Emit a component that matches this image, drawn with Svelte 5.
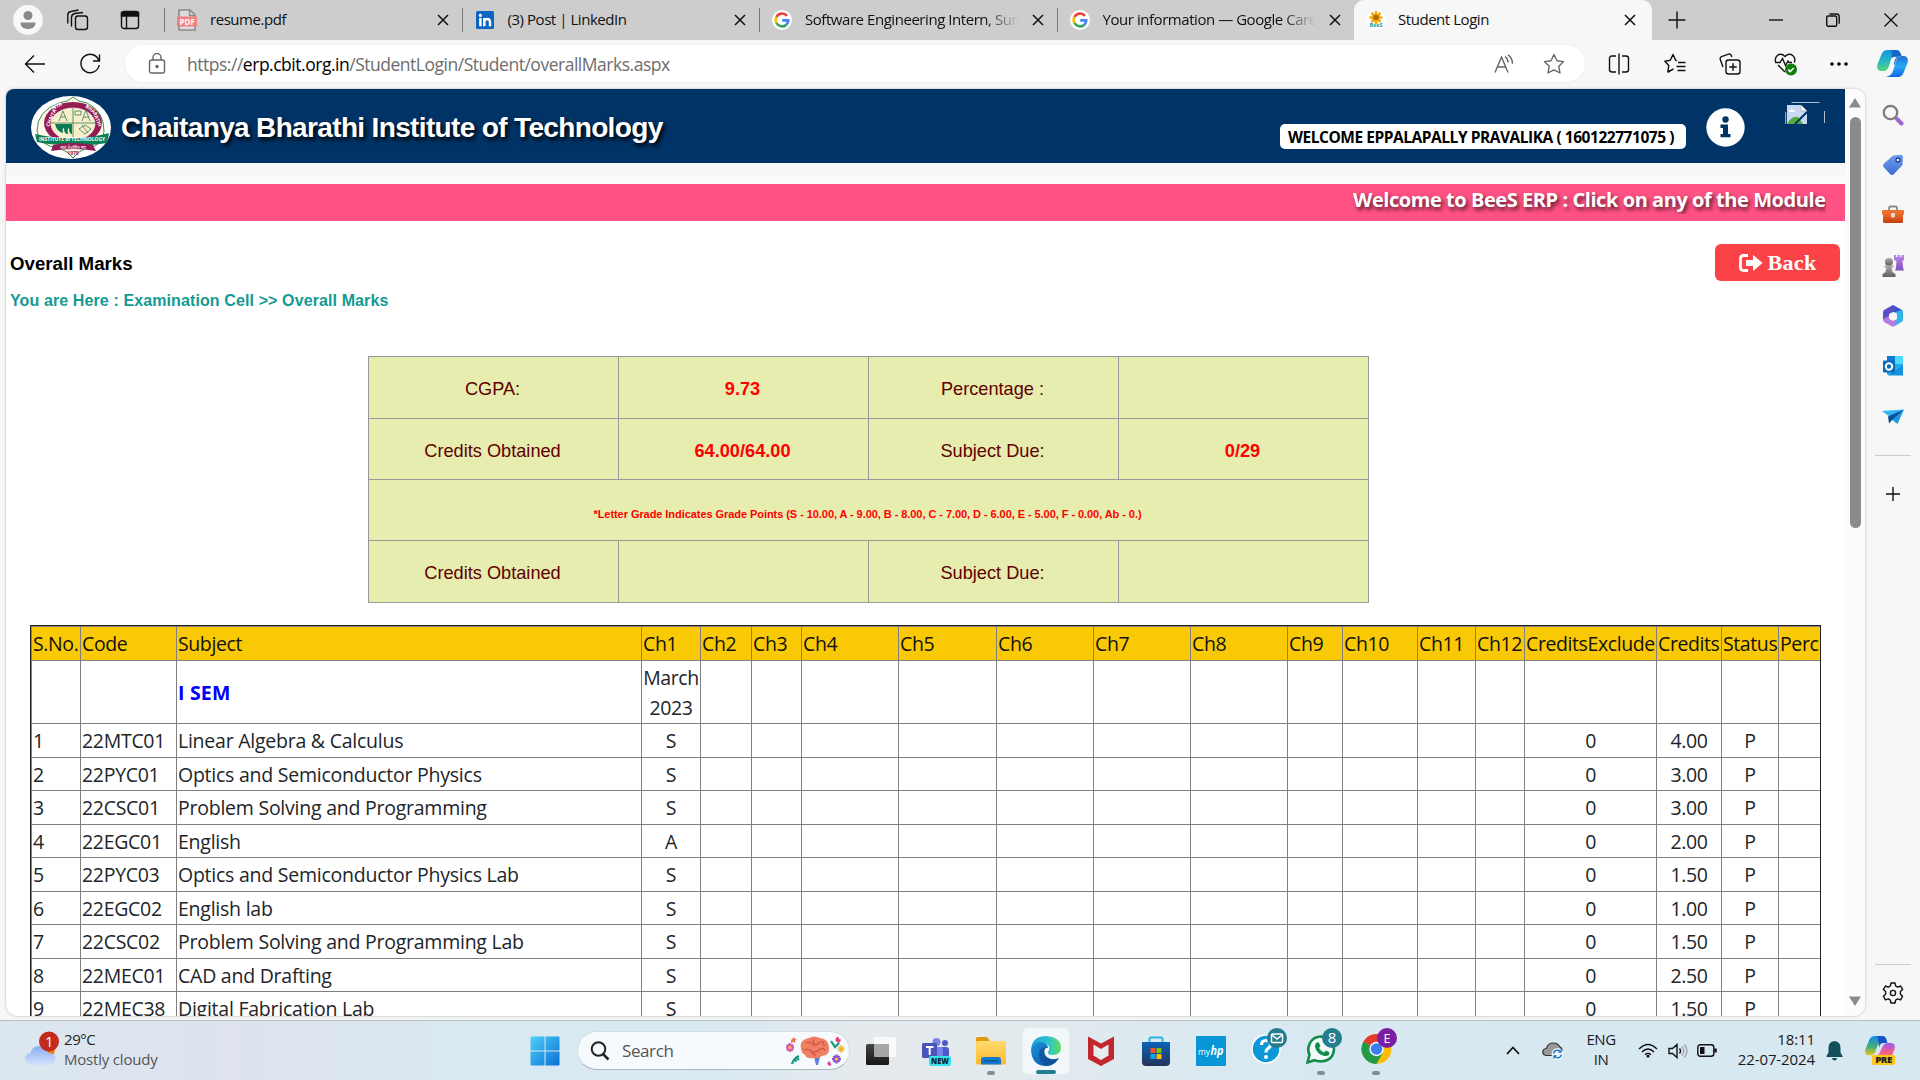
<script>
  const tabs = [
    { title: 'resume.pdf', icon: 'pdf', cls: 'first' },
    { title: '(3) Post | LinkedIn', icon: 'in', cls: '' },
    { title: 'Software Engineering Intern, Sum', icon: 'g', cls: 'fade' },
    { title: 'Your information — Google Care', icon: 'g', cls: 'fade' },
    { title: 'Student Login', icon: 'bee', cls: 'active' }
  ];

  const heads = ['S.No.', 'Code', 'Subject', 'Ch1', 'Ch2', 'Ch3', 'Ch4', 'Ch5', 'Ch6', 'Ch7', 'Ch8', 'Ch9', 'Ch10', 'Ch11', 'Ch12', 'CreditsExclude', 'Credits', 'Status', 'Perc'];
  const blanks = Array(11).fill('');

  const rows = [
    ['1', '22MTC01', 'Linear Algebra & Calculus', 'S', '4.00'],
    ['2', '22PYC01', 'Optics and Semiconductor Physics', 'S', '3.00'],
    ['3', '22CSC01', 'Problem Solving and Programming', 'S', '3.00'],
    ['4', '22EGC01', 'English', 'A', '2.00'],
    ['5', '22PYC03', 'Optics and Semiconductor Physics Lab', 'S', '1.50'],
    ['6', '22EGC02', 'English lab', 'S', '1.00'],
    ['7', '22CSC02', 'Problem Solving and Programming Lab', 'S', '1.50'],
    ['8', '22MEC01', 'CAD and Drafting', 'S', '2.50'],
    ['9', '22MEC38', 'Digital Fabrication Lab', 'S', '1.50']
  ].map(([no, code, subject, grade, credits]) => [no, code, subject, grade, ...blanks, '0', credits, 'P', '']);
</script>

{#snippet cross(size)}
  <svg class="cross" width={size} height={size} viewBox="0 0 12 12"><path d="M1 1l10 10M11 1L1 11" /></svg>
{/snippet}

{#snippet favicon(kind)}
  {#if kind === 'pdf'}
    <svg width="20" height="22" viewBox="0 0 20 22">
      <path d="M2 1h11l5 5v15H2z" fill="#dcdcdc" stroke="#8b8b8b" stroke-width="1.6" />
      <path d="M12.500 1v5.500H18" fill="none" stroke="#8b8b8b" stroke-width="1.4" />
      <rect x="0" y="7.500" width="20" height="10" rx="1" fill="#f27f80" />
      <text x="10" y="15.500" text-anchor="middle" font-size="8" font-weight="700" fill="#fff" textLength="15">PDF</text>
    </svg>
  {:else if kind === 'in'}
    <svg width="20" height="20" viewBox="0 0 20 20">
      <rect x="1" y="1" width="18" height="18" rx="1.500" fill="#0a66c2" />
      <circle cx="5.400" cy="5.400" r="1.600" fill="#fff" />
      <path d="M5.400 8v8.300M9.300 16.300V8M9.300 12c0-4 5.700-4 5.700 0v4.300" fill="none" stroke="#fff" stroke-width="2.500" />
    </svg>
  {:else if kind === 'g'}
    <svg width="20" height="20" viewBox="0 0 20 20">
      <circle cx="10" cy="10" r="10" fill="#fff" />
      <g fill="none" stroke-width="2.700">
        <path d="M15 5.800A6.300 6.300 0 0 0 4.500 7" stroke="#ea4335" />
        <path d="M4.500 7a6.300 6.300 0 0 0 0 6" stroke="#fbbc05" />
        <path d="M4.500 13a6.300 6.300 0 0 0 9.700 1.900" stroke="#34a853" />
        <path d="M14.200 14.900a6.300 6.300 0 0 0 2-4.500H10.200" stroke="#4285f4" />
      </g>
    </svg>
  {:else}
    <svg width="20" height="20" viewBox="0 0 20 20">
      <circle cx="10" cy="10" r="10" fill="#fff" />
      <g stroke="#f4a900" stroke-width="2.600"><path d="M10 1v13M3.600 7.500h12.800M5.500 3l9 9M14.500 3l-9 9" /></g>
      <circle cx="10" cy="7.500" r="2.800" fill="#b56a05" />
      <text x="10" y="17" text-anchor="middle" font-size="5.500" font-weight="700" letter-spacing="0" fill="#1b9aa0">BeeS</text>
    </svg>
  {/if}
{/snippet}

<svg class="defs" width="0" height="0" viewBox="0 0 1 1">
  <defs>
    <linearGradient id="cpA" x1="0" y1="0" x2="0" y2="1"><stop offset="0" stop-color="#1296e0" /><stop offset=".5" stop-color="#23b6c0" /><stop offset="1" stop-color="#5fd27c" /></linearGradient>
    <linearGradient id="cpB" x1="0" y1="0" x2="0" y2="1"><stop offset="0" stop-color="#1b6fd8" /><stop offset=".5" stop-color="#2aa8f2" /><stop offset="1" stop-color="#1466ea" /></linearGradient>
    <linearGradient id="cpC" x1="0" y1="0" x2="0" y2="1"><stop offset="0" stop-color="#1689e8" /><stop offset=".55" stop-color="#3fae7a" /><stop offset="1" stop-color="#f3c51c" /></linearGradient>
    <linearGradient id="cpD" x1="0" y1="0" x2="0" y2="1"><stop offset="0" stop-color="#a15cf0" /><stop offset=".6" stop-color="#ee5c96" /><stop offset="1" stop-color="#fb7a52" /></linearGradient>
    <linearGradient id="tag" x1="0" y1="0" x2="0" y2="1"><stop offset="0" stop-color="#6f9df0" /><stop offset="1" stop-color="#3f6fd0" /></linearGradient>
    <linearGradient id="box" x1="0" y1="0" x2="0" y2="1"><stop offset="0" stop-color="#ef6a28" /><stop offset="1" stop-color="#c43c0c" /></linearGradient>
    <linearGradient id="pawn" x1="0" y1="0" x2="0" y2="1"><stop offset="0" stop-color="#a9a9a9" /><stop offset="1" stop-color="#616161" /></linearGradient>
    <linearGradient id="rook" x1="0" y1="0" x2="0" y2="1"><stop offset="0" stop-color="#bd8ae8" /><stop offset="1" stop-color="#7d4fc0" /></linearGradient>
    <linearGradient id="win" x1="0" y1="0" x2="1" y2="1"><stop offset="0" stop-color="#4fd0f8" /><stop offset="1" stop-color="#0a6fd6" /></linearGradient>
    <linearGradient id="edgeA" x1="0" y1="0" x2="1" y2="0"><stop offset="0" stop-color="#1d9ee0" /><stop offset=".6" stop-color="#2cc4cf" /><stop offset="1" stop-color="#65dd52" /></linearGradient>
    <linearGradient id="edgeB" x1="0" y1="0" x2="1" y2="1"><stop offset="0" stop-color="#1795df" /><stop offset="1" stop-color="#0f4b9c" /></linearGradient>
    <linearGradient id="cloud" x1="0" y1="0" x2="0" y2="1"><stop offset="0" stop-color="#8aaef2" /><stop offset="1" stop-color="#d3e2fb" /></linearGradient>
    <linearGradient id="folder" x1="0" y1="0" x2="0" y2="1"><stop offset="0" stop-color="#ffdc6e" /><stop offset="1" stop-color="#fcb92d" /></linearGradient>
    <linearGradient id="store" x1="0" y1="0" x2="0" y2="1"><stop offset="0" stop-color="#0a62ba" /><stop offset="1" stop-color="#243457" /></linearGradient>
    <linearGradient id="dark" x1="0" y1="0" x2="0" y2="1"><stop offset="0" stop-color="#454545" /><stop offset="1" stop-color="#161616" /></linearGradient>
  </defs>
</svg>

<div class="screen">
  <div class="tabbar">
    <div class="tabtools">
      <svg width="30" height="30" viewBox="0 0 30 30"><circle cx="15" cy="15" r="15" fill="#f8f8f8" /><circle cx="15" cy="10.500" r="4.500" fill="#8a8a8a" /><path d="M7.500 17.500h15c0 4.500-3.500 6.500-7.500 6.500s-7.500-2-7.500-6.500z" fill="#8a8a8a" /></svg>
      <svg class="line" width="24" height="22" viewBox="0 0 24 22"><rect x="9.500" y="7" width="12" height="13.500" rx="2.500" /><path d="M5.500 17.500V8.500q0-3 3-4L17 3.500M1.800 14.500V6q0-3 3-3.500L12.500 1" /></svg>
      <svg class="line" width="20" height="20" viewBox="0 0 20 20"><rect x="1.500" y="1.500" width="17" height="17" rx="2.500" /><path d="M1.500 2.500h17v3.500h-17z" fill="#111" /><path d="M6.500 6v12" /></svg>
    </div>
    {#each tabs as tab}
      <div class="tab {tab.cls}">
        {@render favicon(tab.icon)}
        <span>{tab.title}</span>
        {@render cross(12)}
      </div>
    {/each}
    <div class="winctl">
      <svg class="line" width="18" height="18" viewBox="0 0 18 18"><path d="M9 0.500v17M0.500 9h17" /></svg>
      <svg class="line" width="14" height="14" viewBox="0 0 14 14"><path d="M0 7h14" /></svg>
      <svg class="line" width="14" height="14" viewBox="0 0 14 14"><rect x=".7" y="3" width="10" height="10.300" rx="1.500" /><path d="M3.500 1h7q2.700 0 2.700 2.700v7" /></svg>
      <svg class="line" width="14" height="14" viewBox="0 0 14 14"><path d="M.5.5l13 13M13.500.5l-13 13" /></svg>
    </div>
  </div>

  <div class="toolbar">
    <svg class="line back" width="22" height="20" viewBox="0 0 22 20"><path d="M21 10H1.500M10 1.500L1.500 10l8.500 8.500" /></svg>
    <svg class="line reload" width="22" height="22" viewBox="0 0 22 22"><path d="M20 8A9.200 9.200 0 1 0 20.200 12M20.500 1.500V8H14" /></svg>
    <div class="address">
      <svg class="grey" width="18" height="22" viewBox="0 0 18 22"><rect x="1.500" y="7" width="15" height="13" rx="2" /><path d="M5 7V4.500a4 4 0 0 1 8 0V7" /><circle cx="9" cy="13.500" r="1" fill="#555" /></svg>
      <span class="url">https://<b>erp.cbit.org.in</b>/StudentLogin/Student/overallMarks.aspx</span>
      <svg class="grey" width="20" height="20" viewBox="0 0 20 20"><path d="M1 18.500L7.500 3 14 18.500M3.500 13h8M11 2.500q3 2 3 6M14 .8q4.500 3 4.500 9" /></svg>
      <svg class="grey" width="22" height="22" viewBox="0 0 22 22"><path d="M11 1.500l3 6.200 6.600.9-4.800 4.700 1.200 6.700-6-3.200-6 3.200 1.200-6.700L1.400 8.600 8 7.700z" stroke-linejoin="round" /></svg>
    </div>
    <div class="actions">
      <svg class="line" width="22" height="22" viewBox="0 0 22 22"><path d="M8 3H4Q1.500 3 1.500 5.500v11Q1.500 19 4 19h4M14 3h4q2.500 0 2.500 2.500v11Q20.500 19 18 19h-4M11 .5v21" /></svg>
      <svg class="line" width="22" height="22" viewBox="0 0 22 22"><path d="M13 7.500l-1.300-.2L9 1.500 6.300 7.300l-5.500.9 4 4.200-1 6.400L9.500 16M14 9.500h7.500M12.500 13.500h9M13.500 17.500h8M4 19.500l5-3.500" stroke-linejoin="round" /></svg>
      <svg class="line" width="22" height="22" viewBox="0 0 22 22"><rect x="7" y="7" width="14" height="14" rx="2.500" /><path d="M14 10.300v7.400M10.300 14h7.400M4 14L1.300 6.500q-.6-2 1.200-2.800L9.500 1.200q2-.6 2.800 1.300l.5 1.500" /></svg>
      <svg class="line" width="24" height="24" viewBox="0 0 24 24"><path d="M2 11Q0 6.500 3.500 3.300 7.500.8 11 4.500q3.800-3.700 7.500-1.200Q22 6 20.300 10.500M4 13l7 7M1 10.500h5l2.500-4 3 7 2.500-4.500 1 1.500h3" /><circle cx="17" cy="17.500" r="6" fill="#107c10" stroke="none" /><path d="M14.200 17.600l2 2 3.500-3.700" stroke="#fff" stroke-width="1.500" /></svg>
      <svg width="18" height="6" viewBox="0 0 18 6"><circle cx="2" cy="3" r="1.800" /><circle cx="9" cy="3" r="1.800" /><circle cx="16" cy="3" r="1.800" /></svg>
      <svg width="31" height="27" viewBox="0 0 32 32" preserveAspectRatio="none">
        <path d="M5 4Q7 0 11 0H23Q17 1 15.500 7L12 20Q10.500 25 6 25H4Q-1 24 .5 17z" fill="url(#cpA)" />
        <path d="M27 28Q25 32 21 32H9Q15 31 16.500 25L20 12Q21.500 7 26 7H28Q33 8 31.500 15z" fill="url(#cpB)" />
        <path d="M14 0H20Q23 0 24 3L25.500 7Q21 7 19.800 12L18 18 15 9Q16 1 14 0z" fill="#1269c9" />
        <path d="M15.500 9.500Q16 8 20.500 8 19 10 18 14L16.500 20Q15.500 24 11.500 24 13 22 14 18z" fill="#f7f7f7" />
      </svg>
    </div>
  </div>

  <div class="middle">
    <div class="view">
      <div class="page">
        <header>
          <svg class="crest" width="80" height="63" viewBox="0 0 80 63">
            <ellipse cx="40" cy="31.500" rx="40" ry="31.500" fill="#fff" />
            <path d="M42 1q5 5 14 6 17 8 17 28 0 15-17 17-9 3-14 10-5-7-14-10Q8 50 6 35 6 15 28 7q9-1 14-6z" fill="#fffbe6" stroke="#3b8b55" stroke-width="1" />
            <ellipse cx="42" cy="27" rx="29" ry="21" fill="#941c52" />
            <ellipse cx="42" cy="28" rx="22" ry="16" fill="#f6efca" stroke="#fff" stroke-width=".6" />
            <path d="M42 12v30M20 27h44" stroke="#3c7b50" stroke-width=".8" />
            <path d="M28 25l4-10 4 10M29 21h6M51 25l4-11 4 11M52 21h6M44 15h6v4h-6zM48 33l6-4 6 4-6 5zM51 29l6 8" fill="none" stroke="#4c8b6b" stroke-width=".9" />
            <path d="M24 28h17v10q-3 0-3-6-2 0-1 6-4 0-4-6-2 0-1 5-6-1-8-9z" fill="#0c7a52" />
            <text class="arc" x="18" y="31" transform="rotate(-66 18 31)">CHAITA</text>
            <text class="arc" x="22" y="14" transform="rotate(-28 22 14)">NYA</text>
            <text class="arc" x="54" y="11" transform="rotate(38 54 11)">BHA</text>
            <text class="arc" x="62" y="17" transform="rotate(68 62 17)">RATHI</text>
            <path d="M4 38q38 9 74-1l-2 10q-34 6-70-1z" fill="#0b8055" />
            <text class="band" x="8" y="45" textLength="66" lengthAdjust="spacingAndGlyphs">INSTITUTE of TECHNOLOGY</text>
            <path d="M22 49q20-4 40 0l3 6q-22-4-45 0z" fill="#941c52" />
            <text x="42" y="52.500" text-anchor="middle" font-size="4" fill="#fff">स्वयं तेजस्विन् भव</text>
            <text x="42" y="58.500" text-anchor="middle" font-size="5" font-weight="700" fill="#941c52">1979</text>
          </svg>
          <h1>Chaitanya Bharathi Institute of Technology</h1>
          <span class="who">WELCOME EPPALAPALLY PRAVALIKA ( 160122771075 )</span>
          <svg class="info" width="39" height="39" viewBox="0 0 39 39"><circle cx="19.500" cy="19.500" r="19.200" fill="#fff" /><circle cx="19.500" cy="11.500" r="3.200" fill="#036" /><path d="M14.500 16.500h7.500v9.500h2.500v3.300h-10V26H17v-6h-2.500z" fill="#036" /></svg>
          <svg class="broken" width="40" height="24" viewBox="0 0 40 24">
            <path d="M6.500.5h28M.7 10v12M39.500 9v12" stroke="#aebccb" fill="none" />
            <path d="M2 3h14l6 6v13H2z" fill="#c9d8f3" /><path d="M16 3v6h6z" fill="#fff" stroke="#9a9a9a" stroke-width=".6" />
            <path d="M4 9q2-3 4-1 2 0 2 2H4z" fill="#fff" /><path d="M2 22q6-10 12-6l4 6z" fill="#57ab3c" /><path d="M10 22L22 10" stroke="#036" stroke-width="2" />
          </svg>
        </header>
        <div class="under"></div>
        <div class="marquee"><div>Welcome to BeeS ERP : Click on any of the Module</div></div>
        <div class="titlebar">
          <div>
            <h2>Overall Marks</h2>
            <p>You are Here : Examination Cell &gt;&gt; Overall Marks</p>
          </div>
          <button>
            <svg width="24" height="18" viewBox="0 0 24 18"><path d="M9 1.500H4.500Q1.500 1.500 1.500 4.500v9q0 3 3 3H9" fill="none" stroke="#fff" stroke-width="2.800" /><path d="M7 6h7V.8L23.500 9 14 17.200V12H7z" fill="#fff" /></svg>
            Back
          </button>
        </div>

        <div class="summary">
          <div>CGPA:</div><div class="red">9.73</div><div>Percentage :</div><div></div>
          <div>Credits Obtained</div><div class="red">64.00/64.00</div><div>Subject Due:</div><div class="red">0/29</div>
          <div class="note">*Letter Grade Indicates Grade Points (S - 10.00, A - 9.00, B - 8.00, C - 7.00, D - 6.00, E - 5.00, F - 0.00, Ab - 0.)</div>
          <div>Credits Obtained</div><div></div><div>Subject Due:</div><div></div>
        </div>

        <div class="marks">
          <div class="row head">{#each heads as h}<div>{h}</div>{/each}</div>
          <div class="row sem">
            <div></div><div></div><div class="semname">I SEM</div><div>March<br />2023</div>
            {#each Array(15) as _}<div></div>{/each}
          </div>
          {#each rows as row}
            <div class="row">{#each row as cell}<div>{cell}</div>{/each}</div>
          {/each}
        </div>
      </div>
      <div class="scroll">
        <svg width="14" height="11" viewBox="0 0 14 11"><path d="M7 1L13 10.500H1z" /></svg>
        <div class="thumb"></div>
        <svg width="14" height="11" viewBox="0 0 14 11"><path d="M7 10L13 .5H1z" /></svg>
      </div>
    </div>

    <aside>
      <svg viewBox="0 0 22 22"><circle cx="8.500" cy="8.500" r="6.700" fill="none" stroke="#7d7d7d" stroke-width="2.300" /><path d="M15 15l4.500 4.500" stroke="#9a67d3" stroke-width="4" stroke-linecap="round" /></svg>
      <svg viewBox="0 0 22 22"><path d="M11 1.500L18.500.8q2.500 0 2.500 2.500L20.500 11 11.500 20.500q-1.500 1-3 0L1.500 13q-1-1.500 0-3z" fill="url(#tag)" /><circle cx="16" cy="6" r="2" fill="#e9f0ff" stroke="#203f8f" stroke-width="1.300" /></svg>
      <svg viewBox="0 0 22 22"><path d="M7 6V4q0-1.500 1.500-1.500h5Q15 2.500 15 4v2" fill="none" stroke="#8a8a8a" stroke-width="1.800" /><rect x="0" y="6" width="22" height="5" rx="1" fill="#ee6f30" /><rect x="1" y="10" width="20" height="9" rx="1.500" fill="url(#box)" /><rect x="9" y="9" width="4" height="4.500" rx="1" fill="#dcdcdc" /></svg>
      <svg viewBox="0 0 22 22"><path d="M12 0h2v2h1.500V0h2.500v2h1.500V0H22v5l-1.500 1 .7 7.500 .8 2h-9l.8-2 .7-7.500L12 5z" fill="url(#rook)" /><circle cx="7" cy="7" r="4" fill="url(#pawn)" /><path d="M2.500 10.500h9v2H9.500l1 4.500 3 2v3H.5v-3l3-2 1-4.500h-2z" fill="url(#pawn)" /></svg>
      <svg viewBox="0 0 22 22"><path d="M11 0l9 5v6l-6.500-4L8 10V3z" fill="#2a55c9" /><path d="M20 5l1 1v10l-8 5-5-3 7-4V9.500L13 7z" fill="#35b2e8" /><path d="M11 0L2 5q-1 1-1 3v7l7 4V9l6-4.500z" fill="#5a4fc4" /><path d="M1 14l6-3 1 4 7 0-1.500 4.500L11 22l-9-5z" fill="#b57be0" /><path d="M11 7l4 2v4.500L11 16l-4-2.500V9z" fill="#f7f7f7" /></svg>
      <svg viewBox="0 0 22 22"><rect x="5" y="1" width="16" height="19" rx="1.500" fill="#28a8ea" /><path d="M5 1h8v8H5z" fill="#0f78d4" /><path d="M13 1h7q1 0 1 1v7h-8z" fill="#50d9ff" /><path d="M21 10v10.500H6L14 15z" fill="#1490df" /><rect x="1" y="5.500" width="12" height="12" rx="1.200" fill="#0a6cbd" /><circle cx="7" cy="11.500" r="3.200" fill="none" stroke="#fff" stroke-width="2" /></svg>
      <svg viewBox="0 0 22 22"><path d="M0 6l22-1.500L8 12z" fill="#34b4ef" /><path d="M22 4.500L15.500 19 9 14z" fill="#1c9be2" /><path d="M22 4.500L6 11.500 7 18.500l3-3.500z" fill="#0b4f96" /></svg>
      <hr />
      <svg class="line" viewBox="0 0 22 22"><path d="M11 4v14M4 11h14" /></svg>
      <hr class="low" />
      <svg class="line gear" viewBox="0 0 22 22"><path d="M9 1h4l.7 3 2 1.200L18.600 4l2 3.600-2.200 2v2.600l2.200 2-2 3.600-2.900-1-2 1.200L13 21H9l-.7-3-2-1.200-2.900 1-2-3.600 2.200-2V9.600l-2.200-2 2-3.600 2.900 1.200 2-1.200z" stroke-linejoin="round" /><circle cx="11" cy="11" r="2.600" /></svg>
    </aside>
  </div>

  <footer>
    <div class="weather">
      <svg width="36" height="38" viewBox="0 0 36 38"><circle cx="24" cy="19" r="7" fill="#f2801c" /><path d="M7 34q-6-1-6-6t5.500-6Q8 15 15 15t9.500 7q7 0 7 6t-6 6z" fill="url(#cloud)" /><circle cx="25" cy="10.500" r="10" fill="#c42b1c" /><text x="25" y="16" text-anchor="middle" font-size="15" fill="#fff">1</text></svg>
      <div>29°C<br /><span>Mostly cloudy</span></div>
    </div>
    <svg class="start" width="30" height="30" viewBox="0 0 30 30"><path d="M.5 1.500q0-1 1-1H14.500V14.500H.5zM15.500.5h13q1 0 1 1v13h-14zM.5 15.500h14v14h-13q-1 0-1-1zM15.500 15.500h14v13q0 1-1 1h-13z" fill="url(#win)" /></svg>
    <div class="search">
      <svg width="20" height="20" viewBox="0 0 20 20"><circle cx="8.500" cy="8" r="6.800" fill="none" stroke="#222" stroke-width="2" /><path d="M13 13l5.500 5.500" stroke="#222" stroke-width="2.500" /></svg>
      <span>Search</span>
      <svg width="60" height="30" viewBox="0 0 60 30">
        <path d="M29 21h6l-2 8h-2z" fill="#5b84dd" /><path d="M16 12q-2-8 8-10 5-3 11 0 9 1 9 10 1 7-7 8-4 3-9 2-6 1-8-3-4-2-4-7z" fill="#f07f63" />
        <path d="M21 7q4-2 6 1t7-1 5 3M19 14q4-2 7 1t8-1 6 1M29 3q-2 3 1 5M27 15q0 4 4 4" fill="none" stroke="#c9503f" stroke-width="1.100" />
        <g stroke="#dc5ab6" stroke-width="2.400"><path d="M1 11.500h8M5 7v9M2 8.500l6 6M8 8.500l-6 6" /></g><circle cx="5" cy="11.500" r="1.500" fill="#ffc83d" />
        <g stroke="#8e55cf" stroke-width="2.400"><path d="M47 23h9M51.500 18.500v9M48.500 20l6 6M54.500 20l-6 6" /></g><circle cx="51.500" cy="23" r="1.500" fill="#ffc83d" />
        <path d="M51 2q3-3 3 1 4 0 0 4-5-2-3-5zM43 26q3-2 2 1 3 1 0 3-4-1-2-4z" fill="#e5428d" />
        <path d="M7 28q2-6 7-8M8 24l4 1M11 21l3 3M46 5l4 6 4-4" fill="none" stroke="#149a7c" stroke-width="2.200" />
        <path d="M9 1l1 2 2 0-2 2 0 2-2-1-2 1 0-3z" fill="#ef7a52" /><path d="M56 9v8M52 13h8M53.500 10.500l5 5M58.500 10.500l-5 5" stroke="#eeb125" stroke-width="1.200" />
      </svg>
    </div>
    <div class="apps">
      <div><svg width="30" height="30" viewBox="0 0 30 30"><rect x="0" y="8" width="23" height="21" rx="1.500" fill="url(#dark)" /><rect x="8" y="1" width="22" height="20" rx="1.500" fill="#fff" opacity=".78" /><rect x="8" y="8" width="15" height="13" fill="#888" opacity=".6" /></svg></div>
      <div><svg width="30" height="30" viewBox="0 0 30 30"><circle cx="15.500" cy="6" r="4" fill="#7b83eb" /><circle cx="24" cy="7" r="3" fill="#5059c9" /><rect x="19" y="11" width="9" height="12" rx="3" fill="#5059c9" /><rect x="9" y="11" width="13" height="14" rx="3" fill="#7b83eb" /><rect x="1" y="7" width="15" height="15" rx="1.500" fill="#4b53bc" /><path d="M5 11h7.500M8.700 11v8" stroke="#fff" stroke-width="2" /><rect x="8" y="20" width="22" height="10" rx="2" fill="#33e5ea" /><text x="19" y="28.200" text-anchor="middle" font-size="8.500" font-weight="800" fill="#08262e" textLength="18" lengthAdjust="spacingAndGlyphs">NEW</text></svg></div>
      <div class="run"><svg width="30" height="28" viewBox="0 0 30 28"><path d="M0 1.500Q0 0 1.500 0H11l3 4v6H0z" fill="#e09a0c" /><rect x="0" y="4" width="30" height="23.500" rx="1.500" fill="url(#folder)" /><path d="M5 27.500V23q0-3 3-3h14q3 0 3 3v4.500z" fill="#1179cc" /><path d="M8 24h14" stroke="#074e8c" stroke-width="1.200" /></svg></div>
      <div class="tile"><svg width="30" height="30" viewBox="0 0 30 30"><path d="M0 14Q1 0 15 0q14 1 15 11 0 8-8 8-6 0-5-3 3-5-1-8Q8 4 0 14z" fill="url(#edgeA)" /><path d="M0 14Q3 5 11 6q6 1 6 6-3-1-4 3 0 6 7 8 4 1 8-1-5 8-13 8Q1 30 0 14z" fill="url(#edgeB)" /><path d="M8 16q2-5 8-5-3 2-2.500 6 1 6 8 6.500 3 0 6-1.500-4 8-12 8-8-3-7.500-14z" fill="#114a92" opacity=".65" /></svg></div>
      <div><svg width="28" height="30" viewBox="0 0 28 30"><path d="M1 .5l13 7 13-7v22.500l-13 7-13-7z" fill="#c2272e" /><path d="M6.500 8.500L14 13l7.500-4.500v11L14 24l-7.500-4.500z" fill="#e5edf1" /></svg></div>
      <div><svg width="30" height="30" viewBox="0 0 30 30"><path d="M8.500 8V3q0-1.500 1.500-1.500h10q1.500 0 1.500 1.500v5" fill="none" stroke="#2cb5e8" stroke-width="2" /><path d="M1 6h28v20q0 4-4 4H5q-4 0-4-4z" fill="url(#store)" /><path d="M9.500 12h5v5h-5z" fill="#f35325" /><path d="M15.500 12h5v5h-5z" fill="#81bc06" /><path d="M9.500 18h5v5h-5z" fill="#05a6f0" /><path d="M15.500 18h5v5h-5z" fill="#ffba08" /></svg></div>
      <div><svg width="30" height="30" viewBox="0 0 30 30"><rect width="30" height="30" rx="1" fill="#0896d6" /><text x="2" y="19" font-size="9.500" fill="#fff" textLength="12" lengthAdjust="spacingAndGlyphs">my</text><text x="14.500" y="19" font-size="13" font-weight="700" font-style="italic" fill="#fff" textLength="13" lengthAdjust="spacingAndGlyphs">hp</text></svg></div>
      <div><svg width="36" height="38" viewBox="0 0 36 38"><circle cx="15" cy="22" r="14" fill="#0d96d8" stroke="#fff" stroke-width="1.500" /><path d="M10.500 18q0-4.500 4.500-4.500t4.500 4q0 2.500-2.500 4-2 1.200-2 4" fill="none" stroke="#fff" stroke-width="3.200" /><circle cx="15" cy="30" r="2" fill="#fff" /><circle cx="26" cy="11" r="10" fill="#237d8f" /><rect x="20.500" y="7" width="11" height="8.500" rx="1" fill="none" stroke="#fff" stroke-width="1.500" /><path d="M21 8l5 4 5-4" fill="none" stroke="#fff" stroke-width="1.400" /></svg></div>
      <div class="run"><svg width="36" height="38" viewBox="0 0 36 38"><path d="M1.500 35.500l2-8Q1 23 3.500 17 7 9.500 15 9.500q13 1 13 13Q27 34 15 34.500q-4 0-6.500-1.300z" fill="#f3f9f8" stroke="#128c4b" stroke-width="2.600" /><path d="M10 16l2.500-1 2 4-1.500 2q2 3.500 5 4.500l2-2 3.500 2q0 4-5 3.500-8-2-9.500-9 0-2.500 1-4z" fill="#128c4b" /><circle cx="26" cy="11" r="10" fill="#237d8f" /><text x="26" y="16.300" text-anchor="middle" font-size="15" fill="#fff">8</text></svg></div>
      <div class="run"><svg width="36" height="38" viewBox="0 0 36 38"><circle cx="15.500" cy="22" r="15" fill="#fbbc05" /><path d="M15.500 22L2.500 14.500A15 15 0 0 1 28.500 14.500z" fill="#e33b2e" /><path d="M2.500 14.500A15 15 0 0 0 15.500 37l6.500-11.500-6.500-3.500z" fill="#229a48" /><circle cx="15.500" cy="22" r="7.200" fill="#fff" /><circle cx="15.500" cy="22" r="5.800" fill="#3a7df0" /><circle cx="26" cy="11" r="10" fill="#7b1fa2" /><text x="26" y="15.500" text-anchor="middle" font-size="12.500" fill="#fff">E</text></svg></div>
    </div>
    <div class="tray">
      <svg class="line t-chev" width="14" height="9" viewBox="0 0 14 9"><path d="M1 8l6-6.500L13 8" stroke-width="1.800" /></svg>
      <svg class="t-cloud" width="22" height="18" viewBox="0 0 22 18"><path d="M4 13.500Q.8 13 .8 10q0-3 3.500-3.500Q6 1 11 1q5 0 7 4 2 .5 2 3.500 0 5-5 5z" fill="#999" stroke="#333" stroke-width="1.200" /><circle cx="15.500" cy="12" r="6" fill="#eef6fa" /><path d="M11.500 11.500a4 4 0 0 1 7.300-1.500M19.500 12.500a4 4 0 0 1-7.300 1.500M19 7.500V10.200h-2.700M12 16.500v-2.700h2.700" fill="none" stroke="#1673c9" stroke-width="1.300" /></svg>
      <div class="t-lang">ENG<br />IN</div>
      <svg class="line t-wifi" width="20" height="15" viewBox="0 0 20 15"><path d="M1 6Q10-3 19 6M4 9q6-6 12 0M7 11.700q3-3 6 0" /><circle cx="10" cy="13" r="1.600" fill="#111" stroke="none" /></svg>
      <svg class="line t-vol" width="20" height="16" viewBox="0 0 20 16"><path d="M1 5.500h3.500L9 1.500v13l-4.500-4H1zM11.500 5.500q2 2.500 0 5" /><path d="M14 3.500q3.500 4.500 0 9M16.500 1.500q5 6.500 0 13" opacity=".3" /></svg>
      <svg class="line t-bat" width="20" height="13" viewBox="0 0 20 13"><rect x=".8" y=".8" width="16" height="11.400" rx="2.500" /><rect x="3" y="3" width="4.500" height="7" fill="#111" stroke="none" /><path d="M18.500 4.500v4" stroke-width="2.500" /></svg>
      <div class="t-clock">18:11<br />22-07-2024</div>
      <svg class="t-bell" width="17" height="20" viewBox="0 0 17 20"><path d="M8.500 0q6 .5 6 7v4.500l2 3.500v1H.5v-1l2-3.500V7q0-6.500 6-7zM6 17h5q-.5 2.500-2.500 2.500T6 17z" fill="#134f5c" /></svg>
      <svg class="t-cop" width="30" height="29" viewBox="0 0 34 33" preserveAspectRatio="none">
        <path d="M5 4Q7 0 11 0H23Q17 1 15.500 7L12 17Q10.500 22 6 22H4Q-1 21 .5 15z" fill="url(#cpC)" />
        <path d="M14 0H20Q23 0 24 3L25.500 8H21Q17 8 16 13z" fill="#1456c8" />
        <path d="M30 24H12Q15 23 16.500 19L20 12Q21.500 8 26 8H30Q35 9 33.500 15z" fill="url(#cpD)" />
        <rect x="8" y="21.500" width="26" height="11.500" rx="2" fill="#ffc517" /><text x="21" y="30.800" text-anchor="middle" font-size="9.500" font-weight="800" fill="#222" textLength="19" lengthAdjust="spacingAndGlyphs">PRE</text>
      </svg>
    </div>
  </footer>
</div>

<style>
  :global(body) { margin: 0; overflow: hidden; }
  .defs { position: absolute; }
  .screen { width: 1920px; height: 1080px; display: flex; flex-direction: column; background: #f7f7f7; font-family: "Open Sans", "Noto Sans", sans-serif; color: #111; overflow: hidden; }
  .screen div, header, footer, aside { box-sizing: border-box; }
  svg { display: block; flex: none; }
  .line { fill: none; stroke: #111; stroke-width: 1.4; }
  .grey { fill: none; stroke: #666; stroke-width: 1.4; }
  .cross { fill: none; stroke: #111; stroke-width: 1.5; }

  .tabbar { height: 40px; background: #cdcdcd; display: flex; align-items: center; flex: none; }
  .tabtools { width: 164px; display: flex; align-items: center; padding-left: 13px; gap: 23px; }
  .tabtools svg:last-child { margin-left: 7px; }
  .tab { width: 297.500px; height: 40px; display: flex; align-items: center; padding: 0 13px 0 13px; gap: 13px; font-size: 15px; letter-spacing: -0.45px; position: relative; flex: none; }
  .tab:not(.active)::before { content: ""; position: absolute; left: 0; top: 8px; height: 24px; width: 1px; background: #777; }
  .tab span { flex: 1; white-space: nowrap; overflow: hidden; line-height: 24px; padding-bottom: 2px; }
  .tab.fade span { -webkit-mask-image: linear-gradient(90deg, #000 calc(100% - 34px), transparent); mask-image: linear-gradient(90deg, #000 calc(100% - 34px), transparent); }
  .tab.active { background: #f7f7f7; border-radius: 10px 10px 0 0; padding: 0 16px 0 12px; gap: 12px; }
  .winctl { display: flex; align-items: center; margin-left: 16px; }
  .winctl svg:nth-child(2) { margin-left: 83px; }
  .winctl svg:nth-child(n+3) { margin-left: 43.500px; }

  .toolbar { height: 49px; display: flex; align-items: center; flex: none; padding-bottom: 2px; box-sizing: border-box; }
  .back { margin-left: 24px; }
  .reload { margin-left: 33px; }
  .address { width: 1460px; height: 37px; margin-left: 24px; border-radius: 19px; background: #fff; display: flex; align-items: center; padding: 0 20px 0 23px; box-shadow: 0 0 3px #0001; }
  .url { flex: 1; margin-left: 21px; font-size: 17.500px; color: #6d6d6d; letter-spacing: -0.48px; }
  .url b { color: #000; font-weight: 400; }
  .address svg:last-child { margin-left: 29px; }
  .actions { display: flex; align-items: center; margin-left: 23px; gap: 33.500px; }
  .actions svg:nth-child(4) { margin-left: -1px; }
  .actions svg:nth-child(5) { margin-left: -1px; }
  .actions svg:nth-child(6) { margin-left: -5px; }

  .middle { display: flex; height: 927px; flex: none; }
  .view { width: 1859px; margin-left: 6px; background: #fff; border-radius: 8px 10px 12px 12px; overflow: hidden; display: flex; box-shadow: 0 0 3px #0004; }
  .page { width: 1839px; overflow: hidden; }
  header { height: 74px; background: #036; display: flex; padding-left: 25px; }
  .crest { margin-top: 7px; }
  .arc { font-size: 5px; font-weight: 700; fill: #fff; }
  .band { font-size: 5.500px; font-weight: 700; fill: #fff; }
  h1 { margin: 0 0 0 10px; width: 691px; font: bold 28px/78px "Liberation Sans", Arial, sans-serif; letter-spacing: -0.65px; color: #fff; text-shadow: 2px 3px 4px #000; white-space: nowrap; }
  .who { box-sizing: border-box; width: 406px; height: 25px; margin: 35px 0 0 468px; padding-left: 8px; background: #fff; border-radius: 5px; font-size: 15.500px; line-height: 27px; font-weight: 700; color: #000; letter-spacing: -0.46px; white-space: nowrap; }
  .info { margin: 19px 0 0 20px; }
  .broken { margin: 13px 0 0 40px; }
  .under { height: 21px; background: linear-gradient(#f4f5f8, #fcfcfd); }
  .marquee { height: 37px; background: #ff5183; padding: 0 19px 0 1347px; }
  .marquee div { height: 30px; overflow: hidden; font-size: 20px; font-weight: 700; line-height: 32px; color: #fff; white-space: nowrap; letter-spacing: -0.44px; text-shadow: 2px 3px 4px #000a; }
  .titlebar { height: 135px; display: flex; justify-content: space-between; padding: 23px 5px 0 4px; font-family: "Liberation Sans", Arial, sans-serif; }
  h2 { margin: 8px 0 0; font-size: 18.700px; line-height: 24px; color: #000; }
  p { margin: 14px 0 0; font-size: 16px; line-height: 22px; font-weight: 700; color: #149a93; letter-spacing: 0.11px; }
  button { width: 125px; height: 37px; border: 0; border-radius: 6px; background: #fa4247; color: #fff; font: bold 22px "Liberation Serif", "Times New Roman", serif; letter-spacing: 0.3px; display: flex; align-items: center; justify-content: center; gap: 5px; padding: 0; }

  .summary { width: 1001px; margin-left: 362px; display: grid; grid-template-columns: repeat(4, 250px); grid-template-rows: 62px 61px 61px 62px; border: solid #999; border-width: 0 1px 1px 0; background: #e7edae; font: 18.200px "Liberation Sans", Arial, sans-serif; color: #600000; }
  .summary div { border: solid #999; border-width: 1px 0 0 1px; display: flex; align-items: center; justify-content: center; padding: 4px 2px 0 0; }
  .summary .red { color: #f00; font-weight: 700; }
  .summary .note { grid-column: 1 / 5; color: #f00; font-weight: 700; font-size: 11px; letter-spacing: -0.06px; padding-top: 8px; white-space: nowrap; }

  .marks { margin: 22px 0 0 24px; width: 1791px; border: solid #222; border-width: 1px 1px 0; font-size: 19.500px; letter-spacing: -0.4px; color: #212529; }
  .row { display: grid; grid-template-columns: 49px 96px 465px 59px 51px 50px 97px 98px 97px 97px 97px 55px 75px 58px 49px 132px 65px 57px 42px; height: 33px; }
  .row:nth-child(odd) { height: 34px; }
  .row div { border: solid gray; border-width: 1px 0 0 1px; padding-left: 1px; line-height: 34px; white-space: nowrap; }
  .row:not(.head) div:nth-child(n+4) { text-align: center; padding-left: 0; }
  .row:not(.head) div:nth-child(2) { letter-spacing: -0.3px; }
  .row:not(.head) div:nth-child(3) { letter-spacing: -0.24px; }
  .row.head { color: #111; }
  .row.head div { background: #fac905; }
  .row.sem { height: 63px; }
  .row.sem div { line-height: 30px; padding-top: 2px; }
  .row.sem div.semname { color: #00f; font-weight: 700; line-height: 59px; letter-spacing: 0.2px; }

  .scroll { width: 20px; background: #fcfcfc; display: flex; flex-direction: column; align-items: center; padding: 8px 0 9px; }
  .scroll svg { fill: #8b8b8b; }
  .scroll svg:last-child { margin-top: auto; }
  .thumb { width: 11px; height: 411px; margin-top: 9px; border-radius: 6px; background: #8b8b8b; }

  aside { flex: 1; display: flex; flex-direction: column; align-items: center; padding-top: 15px; }
  aside svg { width: 22px; height: 22px; margin-bottom: 28.200px; }
  hr { width: 36px; margin: 0 0 27px; border: 0; border-top: 1px solid #ccc; flex: none; }
  hr.low { margin: auto 0 17px; }
  aside .gear { margin-bottom: 12px; }

  footer { height: 60px; margin-top: 4px; border-top: 1px solid #b5bcc3; display: flex; align-items: center; background: linear-gradient(90deg, #dbe7f0, #dee3ee 12%, #d9e9f2 25%, #dae9f1 38%, #e5eaed 45%, #e3eaed 52%, #d9e9f1 65%, #d8e8f1); }
  .weather { width: 530px; display: flex; padding-left: 24px; gap: 4px; font-size: 15px; line-height: 20px; letter-spacing: -0.45px; }
  .weather svg { margin-top: -1px; }
  .weather div { color: #222; margin-top: -3px; }
  .weather span { color: #555; letter-spacing: -0.2px; }
  .search { width: 273px; height: 39px; margin-left: 17px; border-radius: 20px; background: #f6fafc; border: 1px solid #d3dde2; border-bottom-color: #aab6bc; display: flex; align-items: center; padding: 0 4px 0 12px; color: #555; font-size: 17px; letter-spacing: -0.4px; }
  .search span { flex: 1; margin-left: 12px; }
  .apps { display: flex; margin-left: 7px; height: 48px; }
  .apps > div { width: 48px; margin-right: 7px; display: flex; align-items: center; justify-content: center; position: relative; }
  .apps .tile { background: #f2f7fa; border: 1px solid #e5ecef; border-radius: 6px; }
  .apps svg[width="36"] { margin: -10px 0 0 5px; }
  .run::after, .tile::after { content: ""; position: absolute; bottom: 0; left: 20px; width: 8px; height: 4px; border-radius: 2px; background: #868e92; }
  .tile::after { width: 20px; left: 13px; background: #237d8f; }
  .tray { display: flex; align-items: center; margin-left: 99px; font-size: 15px; line-height: 20px; letter-spacing: -0.45px; color: #1a1a1a; }
  .t-cloud { margin-left: 22px; }
  .t-lang { width: 40px; margin: -3px 0 0 17px; text-align: center; }
  .t-wifi { margin-left: 17px; }
  .t-vol { margin-left: 10px; }
  .t-bat { margin-left: 9px; }
  .t-clock { width: 84px; margin: -3px 0 0 14px; text-align: right; white-space: nowrap; letter-spacing: -0.1px; }
  .t-bell { margin-left: 11px; }
  .t-cop { margin-left: 22px; }
</style>
